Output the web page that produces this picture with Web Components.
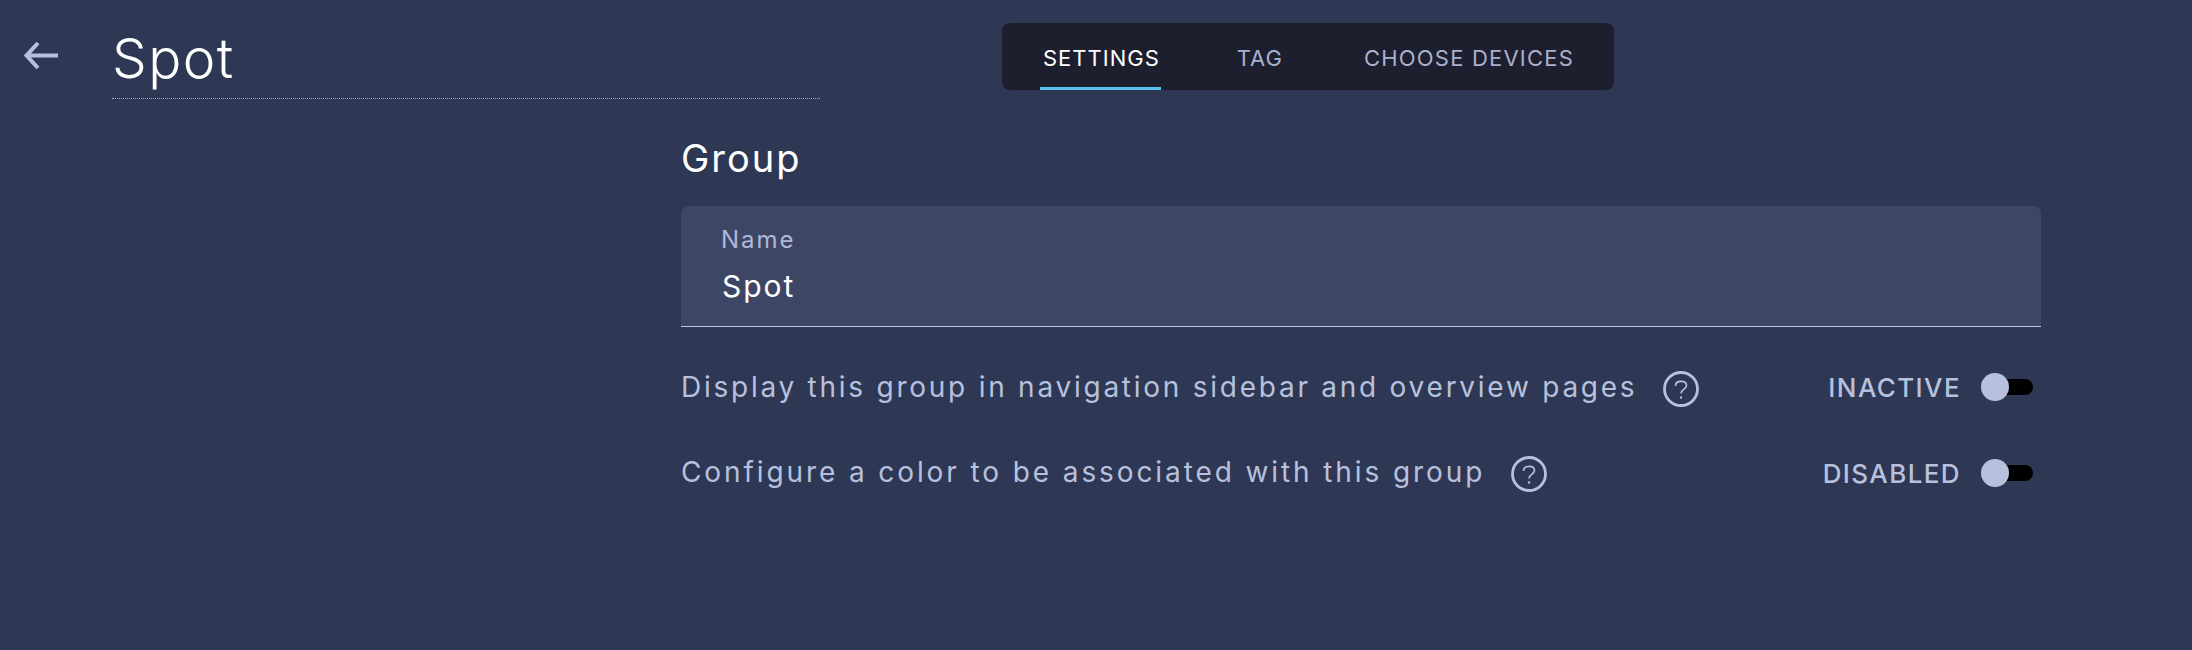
<!DOCTYPE html>
<html>
<head>
<meta charset="utf-8">
<title>Spot</title>
<style>
  html,body{ margin:0; height:100%; background:#2e3854; }
  body{ font-family:"Inter","Liberation Sans",sans-serif; overflow:hidden; }
</style>
</head>
<body>
<group-page></group-page>
<script>
(() => {
  const define = (name, html) => {
    customElements.define(name, class extends HTMLElement {
      constructor(){
        super();
        this.attachShadow({ mode:'open' }).innerHTML = html;
      }
    });
  };

  // Top row: back arrow + page title on the left, tabs in the middle
  define('page-header', `
    <style>
      :host{ display:grid; grid-template-columns:1002px auto; height:90px; padding-top:23px; }
      .left{ display:flex; align-items:flex-start; }
      svg{ width:36px; height:30px; margin:18px 0 0 23px; flex:none; display:block; }
      h1{
        margin:0 0 0 53px; width:708px; height:76px; box-sizing:border-box;
        border-bottom:1px dotted #a3abc4;
        font-size:55px; line-height:70px; font-weight:300; color:#fff; letter-spacing:1.4px;
      }
    </style>
    <div class="left">
      <svg viewBox="0 0 36 30" fill="none" stroke="#b7c1de" stroke-width="4"><path d="M35 14.500H3"/><path d="M15 2L3.500 14.500 15 27"/></svg>
      <h1>Spot</h1>
    </div>
    <slot></slot>
  `);

  define('tab-bar', `
    <style>
      :host{ display:flex; width:612px; height:67px; box-sizing:border-box; background:#1d1f2e; border-radius:8px; padding-left:38px; }
    </style>
    <slot></slot>
  `);

  define('tab-item', `
    <style>
      :host{
        display:block; box-sizing:border-box; height:67px; padding:0 3px; margin-right:var(--gap,0);
        font-size:22px; line-height:70px; letter-spacing:var(--ls,1px); color:#a8b1cf; white-space:nowrap;
      }
      :host([active]){ color:#fff; border-bottom:3px solid #57c3ee; padding-right:1px; }
    </style>
    <slot></slot>
  `);

  define('text-field', `
    <style>
      :host{
        display:block; box-sizing:border-box; height:121px; background:#3e4666;
        border-radius:8px 8px 0 0; border-bottom:1px solid #c0c9e3; padding:19px 40px;
      }
      label{ display:block; font-size:24px; line-height:30px; letter-spacing:2px; color:#b0b9d8; }
      div{ font-size:30px; line-height:36px; margin:13px 0 0 1px; letter-spacing:2px; color:#fff; }
    </style>
    <label><slot name="label"></slot></label>
    <div><slot></slot></div>
  `);

  define('help-icon', `
    <style>:host{ display:block; width:36px; height:36px; flex:none; } svg{ display:block; }</style>
    <svg width="36" height="36" viewBox="0 0 36 36" fill="none" stroke="#b7c1de">
      <circle cx="18" cy="18" r="16.500" stroke-width="2.800"/>
      <path d="M12.500 15c0-3 2.300-4.600 5.500-4.600s5.500 1.700 5.500 4.200c0 3.500-5.500 3.500-5.500 7.900" stroke-width="1.600"/>
      <circle cx="18" cy="26.500" r="1.200" fill="#b7c1de" stroke="none"/>
    </svg>
  `);

  define('toggle-switch', `
    <style>
      :host{ display:block; position:relative; width:52px; height:28px; flex:none; }
      .track{ position:absolute; left:8px; right:0; top:6px; height:16px; border-radius:8px; background:#000; }
      .knob{ position:absolute; left:0; top:0; width:28px; height:28px; border-radius:50%; background:#b7c1de; }
    </style>
    <div class="track"></div><div class="knob"></div>
  `);

  define('setting-row', `
    <style>
      :host{ display:flex; align-items:center; height:36px; margin-top:var(--top,0); color:#b7c1de; }
      .text{ font-size:28px; letter-spacing:var(--ls,2.75px); white-space:nowrap; margin:0 26px var(--text-up,1px) 0; }
      help-icon{ margin-top:var(--help-down,3px); }
      .state{ margin-left:auto; font-size:26px; font-weight:450; letter-spacing:1.4px; margin-right:20px; }
      toggle-switch{ margin-right:8px; }
    </style>
    <span class="text"><slot></slot></span>
    <help-icon></help-icon>
    <span class="state"><slot name="state"></slot></span>
    <toggle-switch></toggle-switch>
  `);

  define('group-form', `
    <style>
      :host{ display:block; width:1360px; margin-left:681px; }
      h2{ margin:0; font-size:38px; line-height:48px; font-weight:400; letter-spacing:2px; color:#fff; }
      text-field{ margin-top:24px; }
    </style>
    <h2>Group</h2>
    <text-field><span slot="label">Name</span>Spot</text-field>
    <setting-row style="--top:42px">Display this group in navigation sidebar and overview pages<span slot="state">INACTIVE</span></setting-row>
    <setting-row style="--top:50px;--help-down:2px;--text-up:3px;--ls:2.9px">Configure a color to be associated with this group<span slot="state">DISABLED</span></setting-row>
  `);

  define('group-page', `
    <style>
      :host{ display:block; }
      group-form{ margin-top:21px; }
    </style>
    <page-header>
      <tab-bar>
        <tab-item active style="--gap:73px">SETTINGS</tab-item>
        <tab-item style="--gap:75px">TAG</tab-item>
        <tab-item style="--ls:1.2px">CHOOSE DEVICES</tab-item>
      </tab-bar>
    </page-header>
    <group-form></group-form>
  `);
})();
</script>
</body>
</html>
